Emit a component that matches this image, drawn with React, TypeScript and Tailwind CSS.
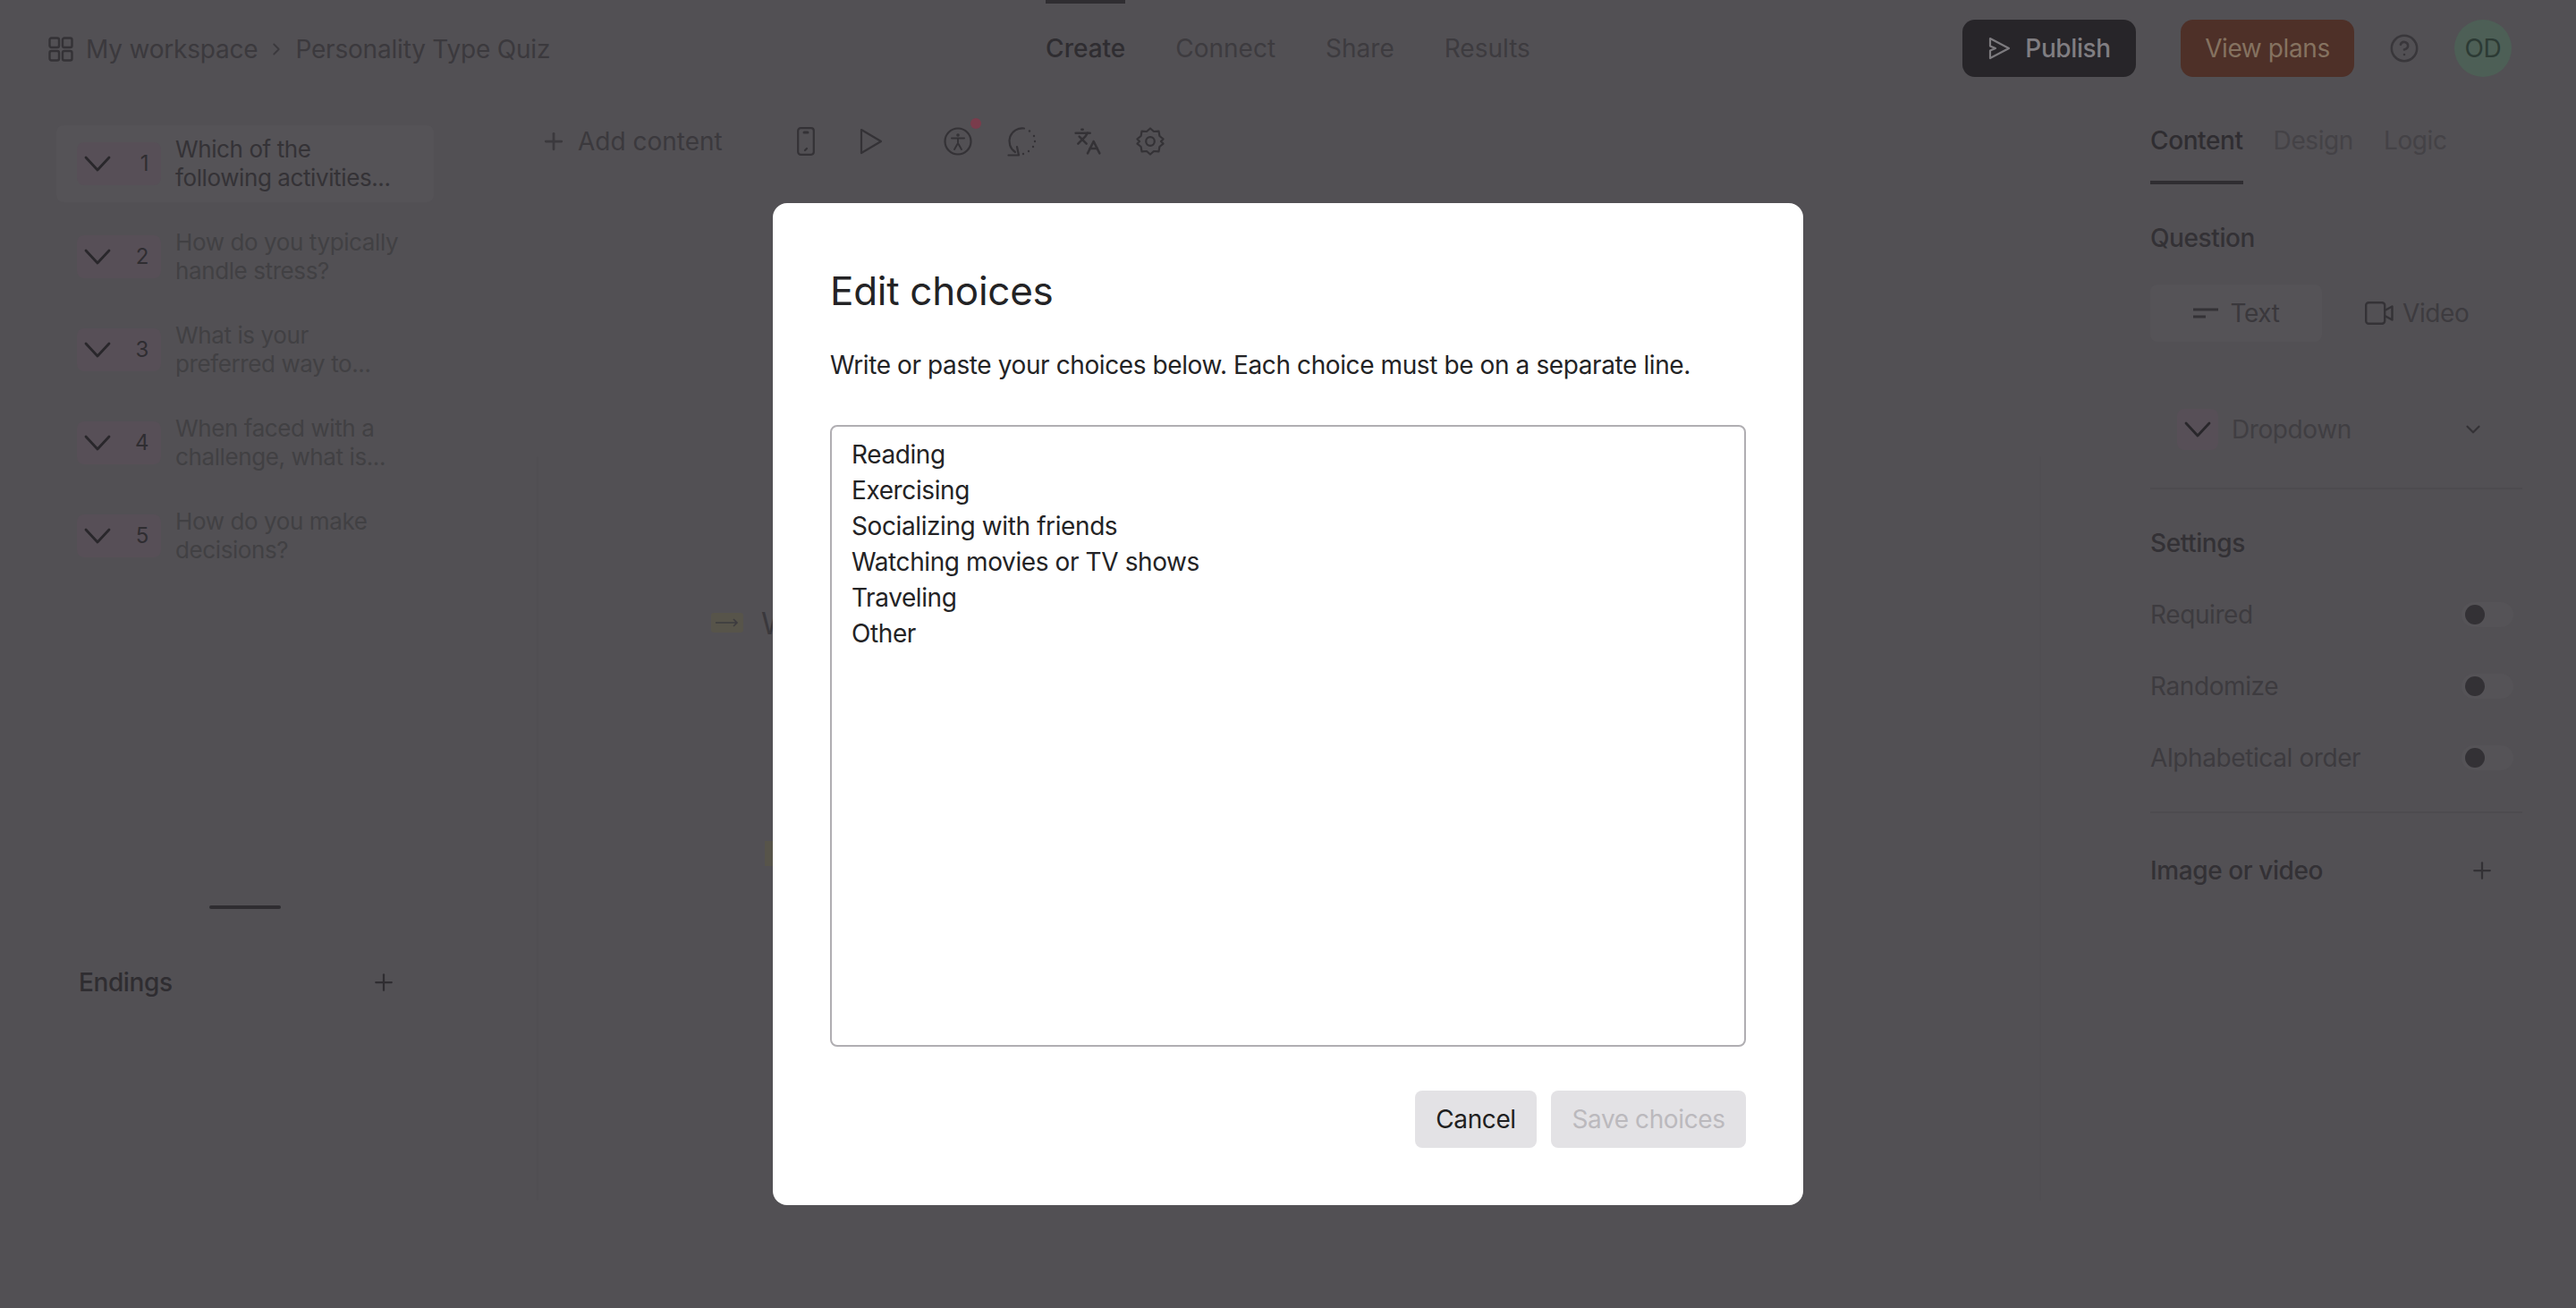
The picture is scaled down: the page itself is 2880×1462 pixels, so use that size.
import React from "react";
import { ChevronRight, Plus, Languages, CircleHelp, ChevronDown } from "lucide-react";

const questions = [
  ["Which of the", "following activities..."],
  ["How do you typically", "handle stress?"],
  ["What is your", "preferred way to..."],
  ["When faced with a", "challenge, what is..."],
  ["How do you make", "decisions?"],
];

function Chevron() {
  return (
    <svg width="30" height="18" viewBox="0 0 30 18" fill="none" stroke="#29272b" strokeWidth="2.8" strokeLinecap="round" strokeLinejoin="round">
      <path d="M2 2 L15 16 L28 2" />
    </svg>
  );
}

function GridIcon() {
  return (
    <svg width="28" height="28" viewBox="0 0 28 28" fill="none" stroke="#343236" strokeWidth="2.4">
      <rect x="1.5" y="1.5" width="10.5" height="10.5" rx="2" />
      <rect x="16" y="1.5" width="10.5" height="10.5" rx="2" />
      <rect x="1.5" y="16" width="10.5" height="10.5" rx="2" />
      <rect x="16" y="16" width="10.5" height="10.5" rx="2" />
    </svg>
  );
}

function PhoneIcon() {
  return (
    <svg width="20" height="32" viewBox="0 0 20 32" fill="none" stroke="#343236" strokeWidth="2.2" strokeLinecap="round">
      <rect x="1.2" y="1.2" width="17.6" height="29.6" rx="3" />
      <path d="M8 6 H12" strokeWidth="3" />
      <path d="M9 26 L11 24" />
    </svg>
  );
}

function PlayIcon() {
  return (
    <svg width="26" height="30" viewBox="0 0 26 30" fill="none" stroke="#343236" strokeWidth="2.2" strokeLinejoin="round">
      <path d="M2 2 L24 15 L2 28 Z" />
    </svg>
  );
}

function AccessIcon() {
  return (
    <svg width="32" height="32" viewBox="0 0 32 32" fill="none" stroke="#343236" strokeWidth="2.2" strokeLinecap="round">
      <circle cx="16" cy="16" r="14.5" />
      <circle cx="16" cy="9" r="1.8" fill="#343236" stroke="none" />
      <path d="M9 12.5 H23 M16 12.5 V18 M16 18 L12 25 M16 18 L20 25" strokeWidth="1.9" />
    </svg>
  );
}

function LoopIcon() {
  const dots: [number, number][] = [[25, 5.5], [30, 11], [31, 17], [29, 23], [24, 28], [18, 31]];
  return (
    <svg width="34" height="34" viewBox="0 0 34 34" fill="none" stroke="#343236" strokeWidth="2.2" strokeLinecap="round" strokeLinejoin="round">
      <path d="M19 2.5 A14.5 14.5 0 0 0 9 29" />
      <path d="M1.5 32.5 H13 L11 23" />
      {dots.map(([x, y], i) => (
        <circle key={i} cx={x} cy={y} r="1.2" fill="#343236" stroke="none" />
      ))}
    </svg>
  );
}

function GearIcon() {
  return (
    <svg width="32" height="32" viewBox="0 0 32 32" fill="none" stroke="#343236" strokeWidth="2.2" strokeLinejoin="round">
      <path d="M16 1.5 L20 5 L25.5 4.6 L26.4 10 L30.5 13.4 L28 16 L30.5 18.6 L26.4 22 L25.5 27.4 L20 27 L16 30.5 L12 27 L6.5 27.4 L5.6 22 L1.5 18.6 L4 16 L1.5 13.4 L5.6 10 L6.5 4.6 L12 5 Z" />
      <circle cx="16" cy="16" r="4.8" />
    </svg>
  );
}

function SendIcon() {
  return (
    <svg width="26" height="26" viewBox="0 0 26 26" fill="none" stroke="#7d7b7f" strokeWidth="2.2" strokeLinejoin="round">
      <path d="M3 2 L24 13 L3 24 L3 15.5 L9 13 L3 10.5 Z" />
    </svg>
  );
}

function TextIcon() {
  return (
    <svg width="28" height="14" viewBox="0 0 28 14" fill="none" stroke="#343236" strokeWidth="3">
      <path d="M0 3 H28 M0 11 H14" />
    </svg>
  );
}

function VideoIcon() {
  return (
    <svg width="32" height="26" viewBox="0 0 32 26" fill="none" stroke="#343236" strokeWidth="2.4" strokeLinejoin="round">
      <rect x="1.2" y="1.2" width="21" height="23.6" rx="3" />
      <path d="M22.2 10 L30.5 5.5 V20.5 L22.2 16" />
    </svg>
  );
}

function Toggle() {
  return (
    <div className="flex h-[28px] w-[58px] items-center rounded-full bg-[#555357] pl-[4px]">
      <div className="h-[22px] w-[22px] rounded-full bg-[#333135]" />
    </div>
  );
}

function SettingRow({ label }: { label: string }) {
  return (
    <div className="flex h-[40px] items-center justify-between pr-[10px] text-[#3d3b3f]">
      <span>{label}</span>
      <Toggle />
    </div>
  );
}

export default function App() {
  return (
    <div
      className="relative h-[1462px] w-[2880px] overflow-hidden bg-[#525054] text-[28px] tracking-[-0.4px] text-[#3a383c]"
      style={{ fontFamily: 'Inter, "Liberation Sans", sans-serif' }}
    >
      {/* Header */}
      <header className="grid h-[112px] grid-cols-[1fr_auto_1fr] items-center">
        <div className="mb-[3px] flex items-center pl-[54px] tracking-[-0.2px] text-[#3b393d]">
          <GridIcon />
          <span className="ml-[14px]">My workspace</span>
          <ChevronRight size={22} strokeWidth={2} className="mx-[10px]" />
          <span>Personality Type Quiz</span>
        </div>
        <nav className="flex h-full gap-[56px] tracking-normal">
          <div className="flex h-full items-center border-t-4 border-[#2f2d31] pb-[8px] font-medium text-[#2f2d31]">Create</div>
          <div className="flex h-full items-center border-t-4 border-transparent pb-[8px] text-[#3d3b3f]">Connect</div>
          <div className="flex h-full items-center border-t-4 border-transparent pb-[8px] text-[#3d3b3f]">Share</div>
          <div className="flex h-full items-center border-t-4 border-transparent pb-[8px] text-[#3d3b3f]">Results</div>
        </nav>
        <div className="mb-[4px] flex items-center justify-end pr-[72px]">
          <button className="flex h-[64px] w-[194px] items-center justify-center gap-[16px] rounded-[14px] bg-[#272529] font-medium text-[#807e82]">
            <SendIcon />
            Publish
          </button>
          <button className="ml-[50px] flex h-[64px] w-[194px] items-center justify-center rounded-[14px] bg-[#4e3028] text-[#857260]">
            View plans
          </button>
          <CircleHelp size={34} strokeWidth={1.8} className="ml-[39px] text-[#39373b]" />
          <div className="ml-[39px] flex h-[64px] w-[64px] items-center justify-center rounded-full bg-[#4d5f56] text-[#2c3a34]">OD</div>
        </div>
      </header>

      <div className="flex">
        {/* Questions */}
        <aside className="w-[600px] shrink-0 pt-[28px]">
          <ul className="ml-[63px] flex w-[422px] flex-col gap-[18px]">
            {questions.map((q, i) => (
              <li key={i} className={`flex h-[86px] items-center rounded-[8px] pl-[23px] ${i === 0 ? "bg-[#555357]" : ""}`}>
                <div className="flex h-[48px] w-[94px] items-center justify-between rounded-[8px] bg-[#574f57] pl-[8px] pr-[14px] text-[24px] text-[#2f2d31]">
                  <Chevron />
                  <span>{i + 1}</span>
                </div>
                <div className={`ml-[16px] text-[26px] leading-[32px] ${i === 0 ? "text-[#343236]" : "text-[#414043]"}`}>
                  <div>{q[0]}</div>
                  <div>{q[1]}</div>
                </div>
              </li>
            ))}
          </ul>
          <div className="ml-[234px] mt-[370px] h-[4px] w-[80px] rounded-full bg-[#2f2d31]" />
          <div className="ml-[88px] mt-[62px] flex h-[40px] w-[356px] items-center justify-between font-medium text-[#2f2d31]">
            <span>Endings</span>
            <Plus size={30} strokeWidth={1.8} />
          </div>
        </aside>

        {/* Canvas */}
        <main className="min-w-0 flex-1">
          <div className="flex h-[92px] items-center pl-[4px] tracking-normal text-[#3b393d]">
            <Plus size={30} strokeWidth={2.2} />
            <span className="ml-[12px]">Add content</span>
            <span className="ml-[83px]"><PhoneIcon /></span>
            <span className="ml-[50px]"><PlayIcon /></span>
            <span className="relative ml-[68px]">
              <AccessIcon />
              <span className="absolute right-[-10px] top-[-10px] h-[12px] w-[12px] rounded-full bg-[#7a3c4c]" />
            </span>
            <span className="ml-[39px]"><LoopIcon /></span>
            <Languages size={32} strokeWidth={1.9} className="ml-[40px] text-[#343236]" />
            <span className="ml-[38px]"><GearIcon /></span>
          </div>
          <div className="mt-[306px] h-[832px] border-x-2 border-[#504e52] pt-[170px]">
            <div className="ml-[193px] flex h-[32px] items-center">
              <div className="flex h-[22px] w-[36px] items-center justify-center rounded-[3px] bg-[#57544a]">
                <svg width="26" height="10" viewBox="0 0 26 10" fill="none" stroke="#3d3b3f" strokeWidth="1.6"><path d="M0 5 H24 M20 1 L24 5 L20 9" /></svg>
              </div>
              <span className="ml-[20px] text-[34px] text-[#3a383c]">W</span>
            </div>
            <div className="ml-[253px] mt-[228px] h-[28px] w-[12px] bg-[#57544a]" />
          </div>
        </main>

        {/* Right panel */}
        <aside className="w-[598px] shrink-0 pl-[122px] pr-[60px]">
          <div className="flex h-[94px] gap-[34px]">
            <div className="flex items-center border-b-4 border-[#2f2d31] font-medium text-[#2f2d31]">Content</div>
            <div className="flex items-center border-b-4 border-transparent text-[#444246]">Design</div>
            <div className="flex items-center border-b-4 border-transparent text-[#444246]">Logic</div>
          </div>
          <div className="mt-[40px] flex h-[40px] items-center font-medium text-[#333135]">Question</div>
          <div className="mt-[32px] flex h-[64px] items-center">
            <div className="flex h-full w-[192px] items-center justify-center gap-[14px] rounded-[8px] bg-[#555357]">
              <TextIcon />
              <span>Text</span>
            </div>
            <div className="flex h-full items-center gap-[10px] pl-[48px]">
              <VideoIcon />
              <span className="text-[#3d3b3f]">Video</span>
            </div>
          </div>
          <div className="mt-[66px] flex h-[64px] items-center pl-[30px] pr-[42px] text-[#403e42]">
            <div className="flex h-[46px] w-[46px] items-center justify-center rounded-[8px] bg-[#574f57]">
              <Chevron />
            </div>
            <span className="ml-[15px]">Dropdown</span>
            <ChevronDown size={26} strokeWidth={2} className="ml-auto text-[#343236]" />
          </div>
          <div className="mt-[33px] h-[2px] bg-[#4d4b4f]" />
          <div className="mt-[40px] flex h-[40px] items-center font-medium text-[#333135]">Settings</div>
          <div className="mt-[40px] flex flex-col gap-[40px]">
            <SettingRow label="Required" />
            <SettingRow label="Randomize" />
            <SettingRow label="Alphabetical order" />
          </div>
          <div className="mt-[40px] h-[2px] bg-[#4d4b4f]" />
          <div className="mt-[44px] flex h-[40px] items-center justify-between pr-[30px] font-medium text-[#333135]">
            <span>Image or video</span>
            <Plus size={30} strokeWidth={1.8} />
          </div>
        </aside>
      </div>

      {/* Dialog */}
      <div className="absolute left-[864px] top-[227px] flex h-[1120px] w-[1152px] flex-col rounded-[16px] bg-white px-[64px] pt-[66px] text-[#232325]">
        <h2 className="text-[44px] leading-[64px] tracking-[-0.3px]">Edit choices</h2>
        <p className="mt-[31px] text-[28px] leading-[40px]">Write or paste your choices below. Each choice must be on a separate line.</p>
        <textarea
          readOnly
          className="mt-[47px] h-[695px] w-full resize-none rounded-[8px] border-2 border-[#b0aeb2] px-[22px] pt-[11px] text-[28px] leading-[40px] text-[#232325] outline-none"
          defaultValue={"Reading\nExercising\nSocializing with friends\nWatching movies or TV shows\nTraveling\nOther"}
        />
        <div className="mt-[49px] flex justify-end gap-[16px]">
          <button className="h-[64px] w-[136px] rounded-[8px] bg-[#e3e2e5] text-[#1f1f21]">Cancel</button>
          <button className="h-[64px] w-[218px] rounded-[8px] bg-[#e3e2e5] text-[#bbb9bd]">Save choices</button>
        </div>
      </div>
    </div>
  );
}
